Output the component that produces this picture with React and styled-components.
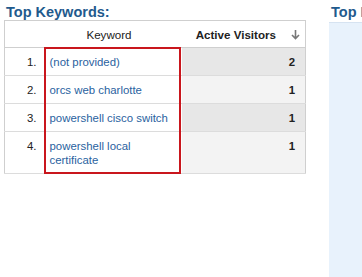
import React from 'react';
import styled, { createGlobalStyle } from 'styled-components';

const GlobalStyle = createGlobalStyle`
  html, body {
    margin: 0;
    padding: 0;
    background: #fff;
    overflow: hidden;
  }
  body {
    font-family: Arial, "Liberation Sans", sans-serif;
  }
`;

const keywords = [
  { term: '(not provided)', visitors: 2 },
  { term: 'orcs web charlotte', visitors: 1 },
  { term: 'powershell cisco switch', visitors: 1 },
  { term: 'powershell local certificate', visitors: 1 },
];

const DownArrow = () => (
  <svg width="9" height="11" viewBox="0 0 9 11">
    <path d="M4.5 1 V9.5 M1 6 L4.5 9.5 L8 6" fill="none" stroke="#777" strokeWidth="1.6" />
  </svg>
);

const App = () => (
  <>
    <GlobalStyle />
    <Page>
      <Widget>
        <Title>Top Keywords:</Title>
        <TableWrap>
          <Table>
            <colgroup>
              <col style={{ width: 40 }} />
              <col style={{ width: 137 }} />
              <col />
            </colgroup>
            <thead>
              <tr>
                <Th />
                <Th>Keyword</Th>
                <Th $sorted>
                  <SortLabel>
                    Active Visitors <DownArrow />
                  </SortLabel>
                </Th>
              </tr>
            </thead>
            <tbody>
              {keywords.map((k, i) => (
                <tr key={k.term}>
                  <NumCell>{i + 1}.</NumCell>
                  <TermCell>
                    <a href="#">{k.term}</a>
                  </TermCell>
                  <CountCell $odd={i % 2 === 0}>{k.visitors}</CountCell>
                </tr>
              ))}
            </tbody>
          </Table>
          <Highlight />
        </TableWrap>
      </Widget>
      <SidePanel>
        <Title>Top Pages:</Title>
        <SideBody />
      </SidePanel>
    </Page>
  </>
);

const Page = styled.div`
  display: flex;
  align-items: stretch;
  height: 277px;
  padding: 4px 0 0 4px;
  box-sizing: border-box;
  gap: 23px;
`;

const Widget = styled.section`
  width: 302px;
  flex-shrink: 0;
`;

const Title = styled.h3`
  margin: 0;
  padding-left: 2px;
  font-size: 14.5px;
  line-height: 16px;
  font-weight: bold;
  color: #1f5a8d;
  white-space: nowrap;
`;

const TableWrap = styled.div`
  position: relative;
`;

const Table = styled.table`
  width: 302px;
  border-collapse: collapse;
  table-layout: fixed;
  font-size: 11.4px;
  color: #222;
  border: 1px solid #cfcfcf;

  td,
  th {
    border-bottom: 1px solid #dcdcdc;
  }
`;

const Th = styled.th`
  height: 26px;
  padding: 0 ${({ $sorted }) => ($sorted ? '5px' : '8px')} 0 0;
  font-weight: ${({ $sorted }) => ($sorted ? 'bold' : 'normal')};
  text-align: ${({ $sorted }) => ($sorted ? 'right' : 'center')};
  border-bottom: 1px solid #cfcfcf !important;
  background: #fff;
  color: #222;
  font-size: 11.6px;
`;

const SortLabel = styled.span`
  display: inline-flex;
  align-items: center;
  gap: 15px;
  svg {
    margin-top: 1px;
  }
`;

const NumCell = styled.td`
  padding: 7px 8px 6px 0;
  line-height: 14px;
  text-align: right;
  vertical-align: top;
  background: #fff;
`;

const TermCell = styled.td`
  padding: 7px 6px 6px 5px;
  line-height: 14px;
  vertical-align: top;
  background: #fff;

  a {
    color: #2a62a0;
    text-decoration: none;
  }
`;

const CountCell = styled.td`
  padding: 7px 10px 6px 0;
  line-height: 14px;
  text-align: right;
  vertical-align: top;
  font-weight: bold;
  background: ${({ $odd }) => ($odd ? '#e7e7e7' : '#f3f3f3')};
`;

const Highlight = styled.div`
  position: absolute;
  left: 40px;
  top: 27px;
  width: 137px;
  height: 127px;
  border: 2px solid #c9161d;
  box-sizing: border-box;
  pointer-events: none;
`;

const SidePanel = styled.section`
  flex: 1;
  display: flex;
  flex-direction: column;
  min-width: 0;
  overflow: hidden;
`;

const SideBody = styled.div`
  flex: 1;
  margin-top: 2px;
  background: #e8f2fc;
  border-top: 1px solid #d6e3f1;
`;

export default App;
